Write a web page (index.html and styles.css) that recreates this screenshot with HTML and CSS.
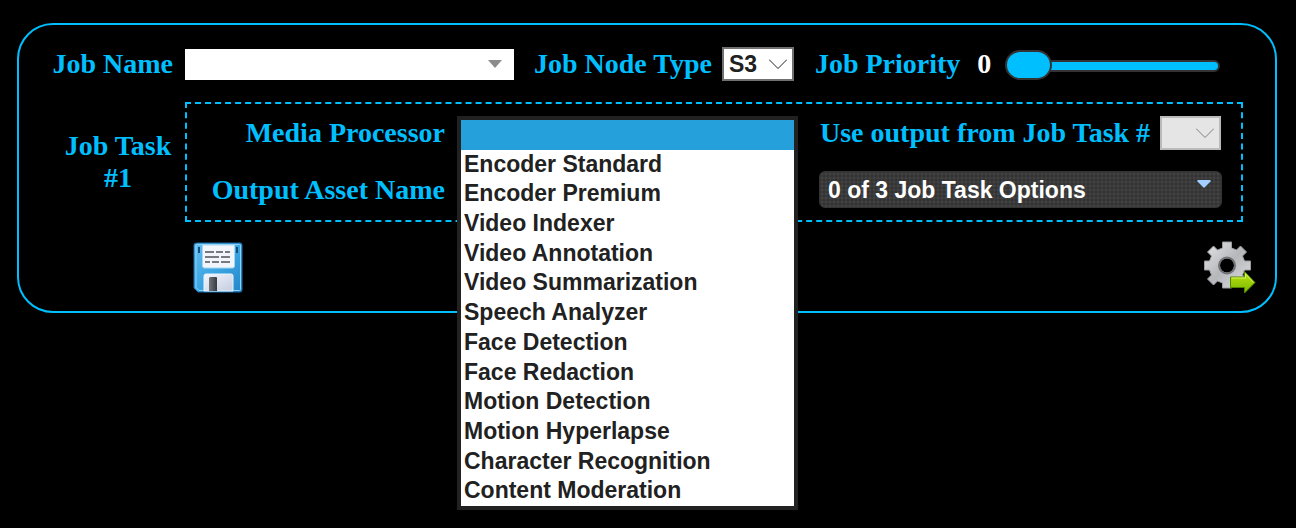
FILE: index.html
```html
<!DOCTYPE html>
<html lang="en">
<head>
<meta charset="utf-8">
<title>Media Job</title>
<link rel="stylesheet" href="styles.css">
</head>
<body>
<form class="panel">
  <div class="fields">
    <label class="label label-end" for="job-name">Job Name</label>
    <div class="job-row">
      <div class="combo">
        <input class="combo-input" id="job-name" type="text">
        <svg class="combo-arrow" viewBox="0 0 14 8" aria-hidden="true"><path d="M0 0h14L7 8z" fill="#8c8c8c"/></svg>
      </div>
      <label class="label node-label" for="node-type">Job Node Type</label>
      <div class="picker picker-node">
        <select class="picker-select" id="node-type"><option>S3</option></select>
        <svg class="chevron" viewBox="0 0 18 10" aria-hidden="true"><path d="M0 .5l9 9 9-9"/></svg>
      </div>
      <label class="label priority-label" for="priority">Job Priority</label>
      <output class="priority-value" for="priority">0</output>
      <input class="slider" id="priority" type="range" min="0" max="9" value="0">
    </div>

    <div class="label task-label">Job Task #1</div>
    <fieldset class="task" aria-label="Job Task #1">
      <label class="label label-end" for="processor">Media Processor</label>
      <div class="processor">
        <select class="processor-select" id="processor" aria-label="Media Processor"><option></option></select>
        <ul class="menu" role="listbox" aria-label="Media Processor">
          <li class="menu-item menu-item-active" role="option" aria-selected="true"></li>
          <li class="menu-item" role="option">Encoder Standard</li>
          <li class="menu-item" role="option">Encoder Premium</li>
          <li class="menu-item" role="option">Video Indexer</li>
          <li class="menu-item" role="option">Video Annotation</li>
          <li class="menu-item" role="option">Video Summarization</li>
          <li class="menu-item" role="option">Speech Analyzer</li>
          <li class="menu-item" role="option">Face Detection</li>
          <li class="menu-item" role="option">Face Redaction</li>
          <li class="menu-item" role="option">Motion Detection</li>
          <li class="menu-item" role="option">Motion Hyperlapse</li>
          <li class="menu-item" role="option">Character Recognition</li>
          <li class="menu-item" role="option">Content Moderation</li>
        </ul>
      </div>
      <div class="source">
        <label class="label" for="source-task">Use output from Job Task #</label>
        <div class="picker picker-source">
          <select class="picker-select" id="source-task" disabled><option></option></select>
          <svg class="chevron" viewBox="0 0 18 10" aria-hidden="true"><path d="M0 .5l9 9 9-9"/></svg>
        </div>
      </div>
      <label class="label label-end" for="asset-name">Output Asset Name</label>
      <input class="asset-input" id="asset-name" type="text">
      <button class="options" type="button">
        <span>0 of 3 Job Task Options</span>
        <svg class="options-arrow" viewBox="0 0 14 8" aria-hidden="true"><path d="M1 0h12l1 1-7 7-7-7z" fill="#a3ceff"/></svg>
      </button>
    </fieldset>
  </div>

  <div class="actions">
    <button class="icon-button" type="button" aria-label="Save job">
      <svg class="icon" viewBox="0 0 52 52" aria-hidden="true">
        <defs>
          <linearGradient id="disk" x1="0" y1="0" x2="1" y2="1"><stop offset="0" stop-color="#62bdf0"/><stop offset=".5" stop-color="#3ca5e2"/><stop offset="1" stop-color="#2386c8"/></linearGradient>
          <linearGradient id="shutter" x1="0" y1="0" x2="1" y2="1"><stop offset="0" stop-color="#f4f6fd"/><stop offset="1" stop-color="#c4cce0"/></linearGradient>
          <linearGradient id="slot" x1="0" y1="0" x2="1" y2="0"><stop offset="0" stop-color="#73777c"/><stop offset="1" stop-color="#36393e"/></linearGradient>
        </defs>
        <path d="M4 2h43q2 0 2 2v45q0 2-2 2H5l-4-4V4q0-2 3-2z" fill="url(#disk)" stroke="#1c6fae"/>
        <path d="M4.500 3.500h42q1 0 1 1v44q0 1-1 1H6l-3-3v-42q0-1 1.500-1z" fill="none" stroke="#8cd1f8"/>
        <path d="M9.500 4h32v21q0 2-2 2h-28q-2 0-2-2z" fill="#f2f5fb" stroke="#a5d7f2"/>
        <path d="M5 6h2v6H5zM43 6h2v6h-2z" fill="#174c78"/>
        <path d="M12 11h9m2 0h7m2 0h5M12 16h14m2 0h9M12 21h5m2 0h7m2 0h9" fill="none" stroke="#777b80" stroke-width="2"/>
        <path d="M13 33h25q2 0 2 2v15H11V35q0-2 2-2z" fill="url(#shutter)" stroke="#e6f5fd"/>
        <path d="M17 36h6q1 0 1 1v13h-8V37z" fill="url(#slot)"/>
      </svg>
    </button>
    <button class="icon-button" type="button" aria-label="Run job">
      <svg class="icon" viewBox="0 0 52 52" aria-hidden="true">
        <defs>
          <linearGradient id="gear" x1="0" y1="0" x2="1" y2="1"><stop offset="0" stop-color="#e6e7e9"/><stop offset=".5" stop-color="#b5b7ba"/><stop offset="1" stop-color="#e0e1e3"/></linearGradient>
          <linearGradient id="go" x1="0" y1="0" x2="0" y2="1"><stop offset="0" stop-color="#bce313"/><stop offset="1" stop-color="#7bb800"/></linearGradient>
        </defs>
        <path fill-rule="evenodd" d="M18.500 1h9v6l5 2 4-4 6 6-4 4 2 5h6v9h-6l-2 5 4 4-6 6-4-4-5 2v5h-9v-5l-5-2-4 4-6-6 4-4-2-5H.5v-9h5l2-5-4-4 6-6 4 4 5-2zM23 17a7.500 7.500 0 1 0 0 15 7.500 7.500 0 0 0 0-15z" fill="url(#gear)" stroke="#9a9c9f" stroke-width="1"/>
        <circle cx="23" cy="24.500" r="8" fill="none" stroke="#6f7174" stroke-width="2"/>
        <path d="M26.500 36h14v-5.500L51 41.500 40.500 52v-5.500h-14z" fill="url(#go)" stroke="#4f8500"/>
        <path d="M27.500 37h14v-4l8 8.500" fill="none" stroke="#d5f45c"/>
      </svg>
    </button>
  </div>
</form>
</body>
</html>
```
FILE: styles.css
```css
:root {
  --accent: #00bfff;
  --ink: #212121;
  --serif: "Liberation Serif", "Times New Roman", serif;
  --sans: "Liberation Sans", Arial, sans-serif;
}

* { box-sizing: border-box; }

body {
  min-height: 100vh;
  margin: 0;
  padding: 23px 19px 0 17px;
  background: #000;
  color: var(--accent);
  font: bold 28px/32px var(--serif);
}

.panel {
  padding: 22px 19px 18px 24px;
  border: 2px solid var(--accent);
  border-radius: 36px;
}

.fields {
  display: grid;
  grid-template-columns: 130px minmax(0, 1fr);
  gap: 21px 12px;
  align-items: center;
  padding-right: 13px;
}

.label { white-space: nowrap; }

.label-end { justify-self: end; }

.job-row {
  display: flex;
  align-items: center;
}

.combo {
  display: grid;
  flex: 0 1 329px;
  align-items: center;
}

.combo-input,
.combo-arrow,
.picker-select,
.chevron { grid-area: 1 / 1; }

.combo-input {
  width: 100%;
  height: 31px;
  padding: 0 32px 0 8px;
  border: 0;
  background: #fff;
  color: var(--ink);
  font: bold 23px/28px var(--sans);
}

.combo-arrow {
  justify-self: end;
  width: 14px;
  height: 8px;
  margin-right: 12px;
}

.node-label { margin: 0 10px 0 20px; }

.picker {
  display: grid;
  align-items: center;
}

.picker-node { width: 72px; }

.picker-source { width: 61px; }

.picker-select {
  appearance: none;
  width: 100%;
  height: 34px;
  padding: 0 5px;
  border: 2px solid #707070;
  border-radius: 0;
  background: #fff;
  color: var(--ink);
  font: bold 23px/28px var(--sans);
}

.picker-select:disabled {
  border-color: #bababa;
  background: #e5e5e5;
  opacity: 1;
}

.chevron {
  justify-self: end;
  width: 18px;
  height: 10px;
  margin-right: 7px;
  fill: none;
  stroke: var(--ink);
  pointer-events: none;
}

.picker-select:disabled + .chevron { stroke: #808080; }

.priority-label { margin: 0 17px 0 21px; }

.priority-value { color: #fff; }

.slider {
  appearance: none;
  flex: 1;
  min-width: 0;
  height: 34px;
  margin: 0 23px 0 14px;
  padding-top: 4px;
  background: transparent;
}

.slider::-webkit-slider-runnable-track {
  height: 12px;
  border: 2px solid #333;
  border-radius: 6px;
  background: var(--accent);
}

.slider::-webkit-slider-thumb {
  appearance: none;
  width: 47px;
  height: 30px;
  margin: -12px 0 0 -2px;
  border: 2px solid #333;
  border-radius: 15px;
  background: var(--accent);
}

.task-label {
  justify-self: end;
  width: 110px;
  text-align: center;
  white-space: normal;
}

.task {
  display: grid;
  grid-template-columns: minmax(0, 270fr) minmax(0, 341fr) 424px;
  grid-template-rows: 34px 37px;
  row-gap: 21px;
  align-items: center;
  min-width: 0;
  margin: 0;
  padding: 12px 19px 12px 0;
  border: 2px dashed var(--accent);
}

.task > .label-end { margin-right: 12px; }

.processor { position: relative; }

.processor-select,
.asset-input {
  display: block;
  width: 100%;
  height: 34px;
  border: 2px solid #707070;
  background: #fff;
}

.menu {
  position: absolute;
  z-index: 1;
  top: 0;
  left: 0;
  display: grid;
  grid-auto-rows: 1fr;
  width: 100%;
  height: 394px;
  margin: 0;
  padding: 0;
  border: 4px solid var(--ink);
  background: #fff;
  color: var(--ink);
  font: bold 23px/28px var(--sans);
  list-style: none;
}

.menu-item { padding-left: 3px; white-space: nowrap; }

.menu-item-active { background: #26a0da; }

.source {
  display: flex;
  justify-content: space-between;
  align-items: center;
  padding: 0 1px;
  margin-left: 21px;
}

.options {
  display: flex;
  justify-content: space-between;
  align-items: center;
  height: 37px;
  margin-left: 21px;
  padding: 0 10px 0 8px;
  border: 1px solid #333;
  border-radius: 6px;
  background: radial-gradient(circle, #424242 1px, #333 2px) 0 0 / 4px 4px;
  color: #fff;
  font: bold 23px/28px var(--sans);
}

.options-arrow {
  align-self: flex-start;
  width: 14px;
  height: 8px;
  margin-top: 8px;
}

.actions {
  display: flex;
  justify-content: space-between;
  margin-top: 19px;
  padding-left: 150px;
}

.icon-button {
  padding: 0;
  border: 0;
  background: none;
}

.icon {
  display: block;
  width: 52px;
  height: 52px;
}
```
